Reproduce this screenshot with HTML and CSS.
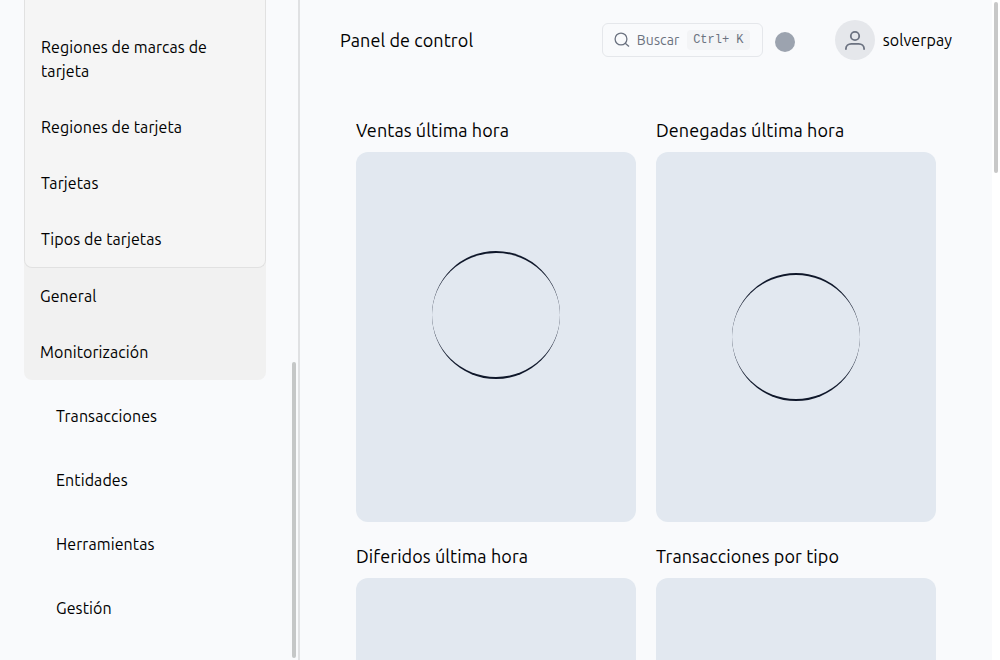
FILE: index.html
```
<!DOCTYPE html>
<html lang="es">
<head>
<meta charset="utf-8">
<title>Panel de control</title>
<link rel="stylesheet" href="styles.css">
</head>
<body>
<div class="app">
  <aside class="sidebar">
    <nav class="menu">
      <div class="group">
        <div class="subgroup">
          <a class="item first">Regiones de marcas de tarjeta</a>
          <a class="item">Regiones de tarjeta</a>
          <a class="item">Tarjetas</a>
          <a class="item">Tipos de tarjetas</a>
        </div>
        <a class="item">General</a>
        <a class="item">Monitorización</a>
      </div>
      <a class="section">Transacciones</a>
      <a class="section">Entidades</a>
      <a class="section">Herramientas</a>
      <a class="section">Gestión</a>
    </nav>
    <div class="side-thumb"></div>
  </aside>
  <main class="content">
    <header class="topbar">
      <h1 class="title">Panel de control</h1>
      <button class="search">
        <svg class="search-icon" viewBox="0 0 16 16"><circle cx="7" cy="7" r="5.9"/><path d="M11.2 11.2 15 14.6"/></svg>
        <span class="search-label">Buscar</span>
        <kbd class="keys">Ctrl+ K</kbd>
      </button>
      <span class="dot"></span>
      <span class="avatar"><svg viewBox="0 0 24 24"><circle cx="12" cy="8" r="4.2"/><path d="M2.9 21.8v-1c0-2.9 2.5-4.9 5.4-4.9h7.4c2.9 0 5.4 2 5.4 4.9v1"/></svg></span>
      <span class="user">solverpay</span>
    </header>
    <div class="cards">
      <section><h2 class="card-title">Ventas última hora</h2><div class="card"><div class="spinner"></div></div></section>
      <section><h2 class="card-title">Denegadas última hora</h2><div class="card low"><div class="spinner"></div></div></section>
      <section><h2 class="card-title">Diferidos última hora</h2><div class="card"></div></section>
      <section><h2 class="card-title">Transacciones por tipo</h2><div class="card"></div></section>
    </div>
  </main>
  <div class="scrollbar"><div class="page-thumb"></div></div>
</div>
</body>
</html>
```
FILE: styles.css
```
* { box-sizing: border-box; }
body { margin: 0; background: #f9fafc; color: #000; font: 16px/24px Ubuntu, "Noto Sans", sans-serif; letter-spacing: 0.09px; }
.app { display: flex; height: 660px; overflow: hidden; }
.sidebar { width: 300px; border-right: 2px solid #e0e1e3; padding: 0 2px 0 24px; display: flex; justify-content: space-between; }
.menu { width: 242px; }
.group { background: #f1f1f1; border-radius: 0 0 8px 8px; }
.subgroup { background: #f5f5f5; border: 1px solid #e1e1e1; border-top: 0; border-radius: 0 0 8px 8px; height: 268px; }
.item { display: block; padding: 16px 32px 16px 16px; }
.subgroup .first { padding-top: 35px; }
.section { display: block; padding: 16px 32px; margin-top: 8px; }
.side-thumb { width: 4px; height: 296px; margin-top: 362px; border-radius: 2px; background: #c5c7c7; }
.content { flex: 1; min-width: 0; }
.topbar { display: flex; align-items: center; height: 80px; padding: 0 40px; }
.title { margin: 0; width: 262px; font-size: 18px; font-weight: 400; white-space: nowrap; }
.search { display: flex; align-items: center; width: 161px; height: 34px; padding: 0 0 0 11px; border: 1px solid #e5e7eb; border-radius: 6px; background: none; color: #6b7280; font: inherit; font-size: 14px; letter-spacing: 0.09px; }
.search-icon { width: 16px; height: 16px; fill: none; stroke: #6b7280; stroke-width: 1.3; }
.search-label { width: 42px; margin: 0 8px 0 7px; text-align: left; }
.keys { width: 63px; height: 20px; border-radius: 4px; background: #f3f4f6; font: 12px/20px "Liberation Mono", monospace; letter-spacing: 0; text-align: center; }
.dot { width: 20px; height: 20px; margin: 4px 40px 0 12px; border-radius: 50%; background: #9ca3af; }
.avatar { display: flex; align-items: center; justify-content: center; width: 40px; height: 40px; border-radius: 50%; background: #e5e7eb; }
.avatar svg { width: 24px; height: 24px; fill: none; stroke: #6b7280; stroke-width: 1.8; }
.user { margin-left: 8px; }
.cards { display: grid; grid-template-columns: 280px 280px; gap: 20px; padding: 36px 56px 0; }
.card-title { margin: 0 0 8px; font-size: 18px; line-height: 28px; font-weight: 400; white-space: nowrap; }
.card { display: flex; justify-content: center; height: 370px; padding-top: 99px; border-radius: 12px; background: #e2e8f0; }
.low { padding-top: 121px; }
.spinner { width: 128px; height: 128px; border: solid #0f172a; border-width: 2px 0; border-radius: 50%; }
.scrollbar { width: 8px; padding: 2px; background: #fff; }
.page-thumb { width: 4px; height: 171px; border-radius: 2px; background: #c8c8c8; }
```
